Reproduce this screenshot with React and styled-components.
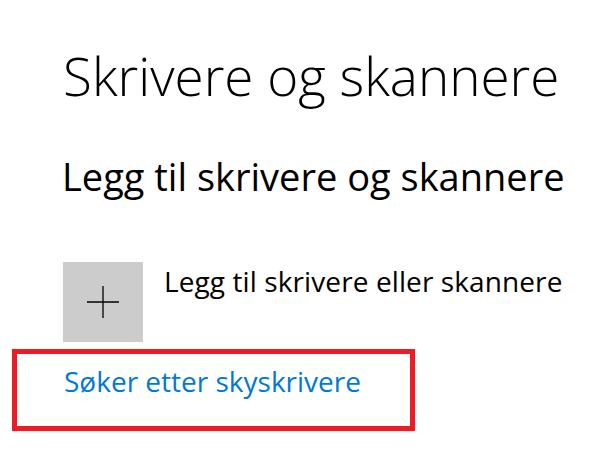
import React from "react";
import styled, { createGlobalStyle } from "styled-components";

const Global = createGlobalStyle`
  html, body { margin: 0; padding: 0; background: #fff; }
  body { font-family: "Open Sans", "Noto Sans", sans-serif; color: #000; }
`;

const Page = styled.main`
  width: 610px;
  height: 456px;
  box-sizing: border-box;
  padding: 0 0 0 12px;
  display: flex;
  flex-direction: column;
  overflow: hidden;
`;

const Title = styled.h1`
  margin: 40px 0 0 51px;
  font-size: 53px;
  font-weight: 300;
  line-height: 72px;
  white-space: nowrap;
`;

const Subtitle = styled.h2`
  margin: 38px 0 0 50px;
  font-size: 38px;
  font-weight: 400;
  line-height: 52px;
  white-space: nowrap;
`;

const AddRow = styled.div`
  margin: 60px 0 0 51px;
  display: flex;
  align-items: flex-start;
  gap: 21px;
`;

const AddButton = styled.div`
  width: 80px;
  height: 80px;
  background: #cccccc;
  display: flex;
  align-items: center;
  justify-content: center;
  flex: none;
`;

const AddLabel = styled.div`
  font-size: 28px;
  line-height: 38px;
  letter-spacing: 0.1px;
  white-space: nowrap;
`;

const Highlight = styled.div`
  margin-top: 7px;
  width: 403px;
  height: 82px;
  box-sizing: border-box;
  border: 5px solid #ed1c24;
  padding: 8px 0 0 47px;
`;

const Link = styled.a`
  color: #0078d7;
  font-size: 28px;
  line-height: 38px;
  text-decoration: none;
  white-space: nowrap;
`;

export default function App() {
  return (
    <>
      <Global />
      <Page>
        <Title>Skrivere og skannere</Title>
        <Subtitle>Legg til skrivere og skannere</Subtitle>
        <AddRow>
          <AddButton>
            <svg width="32" height="32" viewBox="0 0 32 32">
              <path d="M16 0V32M0 16H32" stroke="#000" strokeWidth="1.3" />
            </svg>
          </AddButton>
          <AddLabel>Legg til skrivere eller skannere</AddLabel>
        </AddRow>
        <Highlight>
          <Link>Søker etter skyskrivere</Link>
        </Highlight>
      </Page>
    </>
  );
}
